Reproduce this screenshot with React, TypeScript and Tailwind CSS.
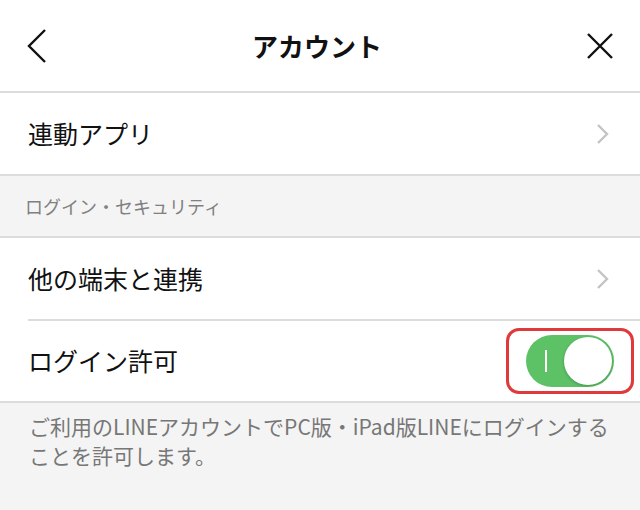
import React from "react";

const font = { fontFamily: '"Noto Sans CJK JP", "Noto Sans", sans-serif' };

function Chevron() {
  return (
    <svg width="14" height="22" viewBox="0 0 14 22" fill="none" stroke="#c4c4c4" strokeWidth={2.4}>
      <path d="M2 2l9 9-9 9" />
    </svg>
  );
}

function Toggle() {
  return (
    <div className="rounded-[13px] border-[3px] border-[#e0393b] px-[17px] py-[4px]">
      <div className="relative h-[52px] w-[88px] rounded-full bg-[#5dc166]">
        <div className="absolute left-[19px] top-[15px] h-[22px] w-[2px] bg-white" />
        <div className="absolute right-[2px] top-[2px] h-[48px] w-[48px] rounded-full bg-white shadow-[0_1px_3px_rgba(0,0,0,0.25)]" />
      </div>
    </div>
  );
}

export default function App() {
  return (
    <div className="w-[640px] h-[510px] bg-[#f4f4f4] text-[#111]" style={font}>
      {/* ヘッダー */}
      <div className="h-[93px] bg-white flex items-center justify-between px-[26px] border-b-2 border-[#dcdcdc]">
        <svg width="22" height="36" viewBox="0 0 22 36" fill="none" stroke="#111" strokeWidth={2.4}>
          <path d="M19 2L3 18l16 16" />
        </svg>
        <span className="text-[26px] font-bold">アカウント</span>
        <svg width="28" height="28" viewBox="0 0 28 28" fill="none" stroke="#111" strokeWidth={2.4}>
          <path d="M2 2l24 24M26 2L2 26" />
        </svg>
      </div>

      <div className="h-[83px] bg-white flex items-center justify-between pl-[28px] pr-[30px] border-b-2 border-[#dcdcdc]">
        <span className="text-[25px]">連動アプリ</span>
        <Chevron />
      </div>

      <div className="h-[62px] flex items-center pl-[25px] text-[18px] text-[#808080] border-b-2 border-[#dcdcdc]">
        ログイン・セキュリティ
      </div>

      <div className="bg-white">
        <div className="h-[81px] flex items-center justify-between pl-[28px] pr-[30px]">
          <span className="text-[25px]">他の端末と連携</span>
          <Chevron />
        </div>
        <div className="ml-[28px] h-[2px] bg-[#dcdcdc]" />
        <div className="h-[80px] flex items-center justify-between pl-[28px] pr-[6px]">
          <span className="text-[25px]">ログイン許可</span>
          <Toggle />
        </div>
      </div>

      <div className="border-t-2 border-[#dcdcdc] pl-[29px] pt-[9px] text-[21px] leading-[29px] text-[#777]">
        ご利用のLINEアカウントでPC版・iPad版LINEにログインする
        <br />
        ことを許可します。
      </div>
    </div>
  );
}
